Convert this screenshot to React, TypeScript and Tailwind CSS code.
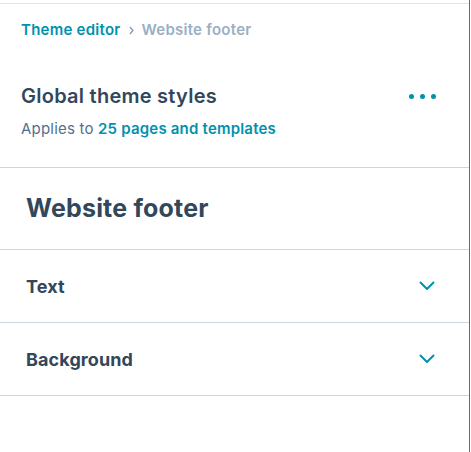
import React from "react";

function Chevron() {
  return (
    <svg width="16" height="10" viewBox="0 0 16 10" fill="none">
      <path d="M1.5 1.5 L8 8 L14.5 1.5" stroke="#0091ae" strokeWidth="2" strokeLinecap="round" strokeLinejoin="round" />
    </svg>
  );
}

function Row({ label }: { label: string }) {
  return (
    <div className="flex h-[73px] items-center justify-between border-b border-[#cbd6e2] pl-[26px] pr-[34px]">
      <span className="text-[18px] font-bold tracking-[0.1px] text-[#33475b]">{label}</span>
      <Chevron />
    </div>
  );
}

export default function App() {
  return (
    <div className="flex h-[452px] w-[471px] bg-white" style={{ fontFamily: "Inter, 'Noto Sans', sans-serif" }}>
      <div className="flex h-full w-[470px] flex-col border-r border-[#0091ae]">
        <div className="mt-[3px] border-t border-[#dfe3eb]" />
        <div className="flex flex-col border-b border-[#cbd6e2] pb-[28px] pl-[21px] pr-[33px] pt-[16px]">
          <div className="flex h-[20px] items-center gap-[8px] text-[15px] font-semibold tracking-[0.25px]">
            <span className="text-[#0091ae]">Theme editor</span>
            <svg width="5" height="9" viewBox="0 0 5 9" fill="none">
              <path d="M0.8 1 L4 4.5 L0.8 8" stroke="#7c98b6" strokeWidth="1.2" />
            </svg>
            <span className="text-[#99afc4]">Website footer</span>
          </div>
          <div className="mt-[42px] flex h-[28px] items-center justify-between">
            <span className="text-[20px] font-semibold tracking-[0.25px] text-[#33475b]">Global theme styles</span>
            <div className="flex gap-[6px]">
              <span className="h-[5px] w-[5px] rounded-full bg-[#0091ae]" />
              <span className="h-[5px] w-[5px] rounded-full bg-[#0091ae]" />
              <span className="h-[5px] w-[5px] rounded-full bg-[#0091ae]" />
            </div>
          </div>
          <div className="mt-[9px] h-[20px] text-[15px] leading-[20px] tracking-[0.2px] text-[#516f90]">
            Applies to <span className="font-semibold text-[#0091ae]">25 pages and templates</span>
          </div>
        </div>
        <div className="flex h-[82px] items-center border-b border-[#cbd6e2] pl-[26px]">
          <span className="text-[25px] font-bold tracking-[0.2px] text-[#33475b]">Website footer</span>
        </div>
        <Row label="Text" />
        <Row label="Background" />
      </div>
    </div>
  );
}
